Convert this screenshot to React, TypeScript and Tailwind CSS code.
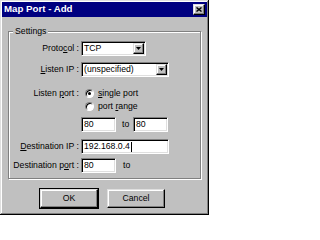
const FONT = "font-['Liberation_Sans',Arial,sans-serif]";
const SUNKEN =
  "border border-t-[#808080] border-l-[#808080] border-b-white border-r-white shadow-[inset_1px_1px_0_#000,inset_-1px_-1px_0_#dfdfdf] bg-white";
const RAISED =
  "border border-t-[#dfdfdf] border-l-[#dfdfdf] border-b-black border-r-black shadow-[inset_-1px_-1px_0_#808080,inset_1px_1px_0_#fff] bg-[#c0c0c0]";

function Label({ children }: { children: React.ReactNode }) {
  return <div className="w-[72px] shrink-0 pr-[2px] text-right whitespace-nowrap">{children}</div>;
}

function Combo({ value, width }: { value: string; width: string }) {
  return (
    <div className={`flex h-[15px] p-[1px] ${width} ${SUNKEN}`}>
      <div className="flex-1 pl-[1px] leading-[11px]">{value}</div>
      <div className={`flex w-[11px] items-center justify-center ${RAISED}`}>
        <svg width="5" height="3" viewBox="0 0 5 3">
          <path d="M0 0h5L2.5 3z" fill="#000" />
        </svg>
      </div>
    </div>
  );
}

function Field({ value, width, caret }: { value: string; width: string; caret?: boolean }) {
  return (
    <div className={`flex h-[15px] items-center pl-[2px] ${width} ${SUNKEN}`}>
      <span className="leading-none">{value}</span>
      {caret && <span className="ml-[1px] h-[10px] w-[1px] bg-black" />}
    </div>
  );
}

function Radio({ checked, children }: { checked?: boolean; children: React.ReactNode }) {
  return (
    <div className="flex h-[13px] items-center">
      <div
        className="ml-[4px] flex h-[9px] w-[9px] items-center justify-center rounded-full border border-t-[#808080] border-l-[#808080] border-b-white border-r-white bg-white shadow-[inset_1px_1px_0_#000]"
      >
        {checked && <div className="h-[3px] w-[3px] rounded-full bg-black" />}
      </div>
      <span className="ml-[4px]">{children}</span>
    </div>
  );
}

export default function App() {
  return (
    <div
      className={`h-[215px] w-[209px] bg-[#c0c0c0] p-[2px] text-[8.7px] text-black ${FONT} shadow-[inset_-1px_-1px_0_#000,inset_1px_1px_0_#dfdfdf,inset_-2px_-2px_0_#808080,inset_2px_2px_0_#fff]`}
    >
      <div className="flex h-[15px] items-center justify-between bg-[#000080] pl-[2px] pr-[2px]">
        <span className="text-[9.7px] font-bold text-white">Map Port - Add</span>
        <div className={`flex h-[11px] w-[12px] items-center justify-center ${RAISED}`}>
          <svg width="6" height="5" viewBox="0 0 6 5">
            <path d="M0.5 0.5L5.5 4.5M5.5 0.5L0.5 4.5" stroke="#000" strokeWidth="1.4" />
          </svg>
        </div>
      </div>

      <div className="relative ml-[6px] mt-[14px] h-[148px] w-[193px] border border-[#808080] pt-[9px] shadow-[inset_1px_1px_0_#fff,1px_1px_0_#fff]">
        <span className="absolute left-[4px] top-[-6px] bg-[#c0c0c0] px-[2px] leading-[10px]">Settings</span>

        <div className="flex h-[15px] items-center">
          <Label>
            Proto<u>c</u>ol :
          </Label>
          <Combo value="TCP" width="w-[65px]" />
        </div>

        <div className="mt-[6px] flex h-[15px] items-center">
          <Label>
            <u>L</u>isten IP :
          </Label>
          <Combo value="(unspecified)" width="w-[88px]" />
        </div>

        <div className="mt-[10px] flex">
          <div className="flex h-[13px] items-center">
            <Label>
              Listen <u>p</u>ort :
            </Label>
          </div>
          <div className="flex flex-col">
            <Radio checked>
              <u>s</u>ingle port
            </Radio>
            <Radio>
              port <u>r</u>ange
            </Radio>
          </div>
        </div>

        <div className="mt-[4px] flex h-[15px] items-center">
          <div className="w-[72px] shrink-0" />
          <Field value="80" width="w-[35px]" />
          <span className="w-[17px] pl-[6px]">to</span>
          <Field value="80" width="w-[35px]" />
        </div>

        <div className="mt-[7px] flex h-[15px] items-center">
          <Label>
            <u>D</u>estination IP :
          </Label>
          <Field value="192.168.0.4" width="w-[88px]" caret />
        </div>

        <div className="mt-[4px] flex h-[15px] items-center">
          <Label>
            Destination p<u>o</u>rt :
          </Label>
          <Field value="80" width="w-[35px]" />
          <span className="pl-[7px]">to</span>
        </div>
      </div>

      <div className="mt-[10px] flex pl-[38px]">
        <div className="outline outline-1 outline-black">
          <button className={`h-[19px] w-[58px] ${RAISED}`}>OK</button>
        </div>
        <button className={`ml-[9px] h-[19px] w-[58px] ${RAISED}`}>Cancel</button>
      </div>
    </div>
  );
}
